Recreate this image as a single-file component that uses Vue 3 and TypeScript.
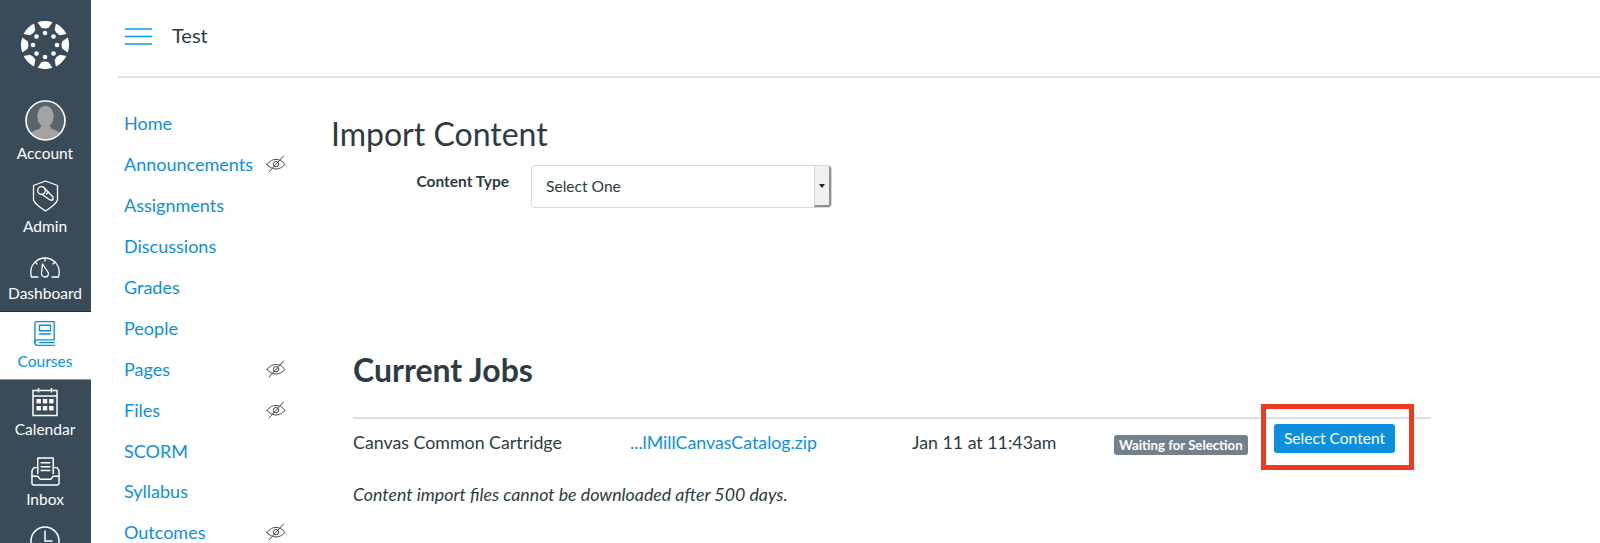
<script setup lang="ts">
const pt = (r: number, deg: number) => {
  const a = (deg * Math.PI) / 180
  return `${(50 + r * Math.cos(a)).toFixed(2)} ${(50 + r * Math.sin(a)).toFixed(2)}`
}
const wedges = Array.from({ length: 8 }, (_, i) => {
  const c = i * 45 - 90
  return `M${pt(50, c - 18)} A50 50 0 0 1 ${pt(50, c + 18)} L${pt(37, c + 12)} Q${pt(33, c)} ${pt(37, c - 12)}Z`
})
const dots = Array.from({ length: 8 }, (_, i) => {
  const a = ((i * 45 - 90) * Math.PI) / 180
  return { x: 50 + 25 * Math.cos(a), y: 50 + 25 * Math.sin(a) }
})
const navItems = [
  { label: 'Home', hidden: false },
  { label: 'Announcements', hidden: true },
  { label: 'Assignments', hidden: false },
  { label: 'Discussions', hidden: false },
  { label: 'Grades', hidden: false },
  { label: 'People', hidden: false },
  { label: 'Pages', hidden: true },
  { label: 'Files', hidden: true },
  { label: 'SCORM', hidden: false },
  { label: 'Syllabus', hidden: false },
  { label: 'Outcomes', hidden: true },
]
</script>

<template>
  <div class="app">
    <aside class="rail">
      <svg class="logo" viewBox="0 0 100 100" fill="#fff">
        <path v-for="(d, i) in wedges" :key="i" :d="d" />
        <circle v-for="(c, i) in dots" :key="'d' + i" :cx="c.x" :cy="c.y" r="4.800" />
      </svg>

      <div class="rail-item account">
        <svg class="avatar" viewBox="0 0 40 40">
          <defs><clipPath id="av"><circle cx="20" cy="20" r="18.500" /></clipPath></defs>
          <circle cx="20" cy="20" r="19" fill="#59636b" />
          <g clip-path="url(#av)" fill="#a3a3a3">
            <ellipse cx="20" cy="16" rx="8" ry="10.500" />
            <path d="M3 40c0-8 5-10 11-12l2-3h8l2 3c6 2 11 4 11 12z" />
          </g>
          <circle cx="20" cy="20" r="19" fill="none" stroke="#fff" stroke-width="1.600" />
        </svg>
        <span>Account</span>
      </div>

      <div class="rail-item admin">
        <svg class="ico" viewBox="0 0 27 32" fill="none" stroke="#fff" stroke-width="1.300" stroke-linejoin="round" stroke-linecap="round">
          <path d="M13.500 1 L25.500 5.500 V20 C24 24 19 27.500 13.500 31 C8 27.500 3 24 1.500 20 V5.500 Z" />
          <circle cx="9.500" cy="10.500" r="3.800" />
          <path d="M12 7.800 L21 17 V20 H18 L9.800 14.300" />
          <path d="M14.500 14 L16.500 12" />
        </svg>
        <span>Admin</span>
      </div>

      <div class="rail-item dash">
        <svg class="ico" viewBox="0 0 30 21" fill="none" stroke="#fff" stroke-width="1.300" stroke-linecap="round" stroke-linejoin="round">
          <path d="M8 20 H1.500 C1 18.500 .8 17 .8 15 A14.200 14 0 0 1 29.200 15 C29.200 17 29 18.500 28.500 20 H22" />
          <path d="M15 1 V4 M5 5 L7 7 M25 5 L23 7" />
          <path d="M12.500 7 L17.500 14.500 A3.200 3.200 0 0 1 15 20 A3.500 3.500 0 0 1 11.500 16 Z" />
        </svg>
        <span>Dashboard</span>
      </div>

      <div class="rail-item courses">
        <svg class="ico" viewBox="0 0 24 28" fill="none" stroke="#0d8fe0" stroke-width="1.500" stroke-linejoin="round" stroke-linecap="round">
          <path d="M3 1 H22 V21 H5 C2 21 1 22.500 1 24 C1 26 3 27 5 27 H22" />
          <path d="M1 24 V4 C1 2 2 1 3 1" />
          <path d="M6 24 H22" />
          <rect x="6" y="5" width="12" height="6" />
          <path d="M6 14.500 H18" />
        </svg>
        <span>Courses</span>
      </div>

      <div class="rail-item cal">
        <svg class="ico" viewBox="0 0 26 30" fill="none" stroke="#fff" stroke-width="1.500">
          <rect x="1" y="3.500" width="24" height="25" />
          <path d="M1 9 H25 M6.500 1 V5.500 M19.500 1 V5.500" />
          <g fill="#fff" stroke="none">
            <rect x="4.500" y="12" width="4.400" height="4.400" /><rect x="10.800" y="12" width="4.400" height="4.400" /><rect x="17.100" y="12" width="4.400" height="4.400" />
            <rect x="4.500" y="19" width="4.400" height="4.400" /><rect x="10.800" y="19" width="4.400" height="4.400" /><rect x="17.100" y="19" width="4.400" height="4.400" />
          </g>
        </svg>
        <span>Calendar</span>
      </div>

      <div class="rail-item inbox">
        <svg class="ico" viewBox="0 0 30 30" fill="none" stroke="#fff" stroke-width="1.500" stroke-linejoin="round" stroke-linecap="round">
          <path d="M7 17 V1 H23 V17" />
          <path d="M10.500 6 H19.500 M10.500 10 H19.500 M10.500 14 H19.500" />
          <path d="M7 11 H3 L1 14 V27 C1 28 2 29 3 29 H27 C28 29 29 28 29 27 V14 L27 11 H23" />
          <path d="M1 20 H7 C8 20 8 23 10 23 H20 C22 23 22 20 23 20 H29" />
        </svg>
        <span>Inbox</span>
      </div>

      <div class="rail-item history">
        <svg class="ico" viewBox="0 0 30 30" fill="none" stroke="#fff" stroke-width="1.500" stroke-linecap="round">
          <circle cx="15" cy="15" r="14" />
          <path d="M15 5 V15 H22" />
        </svg>
      </div>
    </aside>

    <div class="main">
      <header class="top">
        <svg class="burger" viewBox="0 0 27 17" stroke="#0d96ef" stroke-width="1.400">
          <path d="M0 1H27M0 8.500H27M0 16H27" />
        </svg>
        <span class="crumb">Test</span>
      </header>

      <div class="body">
        <nav class="course-nav">
          <div v-for="item in navItems" :key="item.label" class="nav-row">
            <a class="link">{{ item.label }}</a>
            <svg v-if="item.hidden" class="eye" viewBox="0 0 20 18" fill="none" stroke="#44494d" stroke-width="1" stroke-linecap="round">
              <path d="M1 9.500 C4 5.500 7 4.500 10 4.500 C13 4.500 16 5.500 19 9.500 C16 12.500 13 14 10 14 C7 14 4 12.500 1 9.500 Z" />
              <circle cx="10" cy="9.200" r="2.700" />
              <path d="M3 17 L17.500 1" />
            </svg>
          </div>
        </nav>

        <section class="content">
          <h1>Import Content</h1>
          <div class="field">
            <label>Content Type</label>
            <div class="select">
              <span class="value">Select One</span>
              <span class="arrow"><i></i></span>
            </div>
          </div>

          <div class="jobs">
            <h2>Current Jobs</h2>
            <div class="row">
              <span>Canvas Common Cartridge</span>
              <a class="link">...lMillCanvasCatalog.zip</a>
              <span>Jan 11 at 11:43am</span>
              <span class="badge-cell"><span class="badge">Waiting for Selection</span></span>
              <button class="btn" type="button">Select Content</button>
              <div class="callout"></div>
            </div>
            <p class="note">Content import files cannot be downloaded after 500 days.</p>
          </div>
        </section>
      </div>
    </div>
  </div>
</template>

<style>
html, body { margin: 0; background: #fff; overflow: hidden; }
</style>

<style scoped>
.app {
  display: flex;
  height: 543px;
  overflow: hidden;
  font-family: Lato, "Open Sans", sans-serif;
  color: #2d3b45;
  background: #fff;
}
.rail {
  width: 91px;
  flex: none;
  background: #394b58;
  display: flex;
  flex-direction: column;
  align-items: stretch;
  overflow: hidden;
}
.logo { width: 48px; height: 48px; margin: 21px 22px 0 21px; display: block; flex: none; }
.rail-item {
  display: flex;
  flex-direction: column;
  align-items: center;
  color: #fff;
  font-size: 15.500px;
  line-height: 18px;
  flex: none;
  padding-right: 1px;
}
.ico { display: block; flex: none; }
.account { margin-top: 31px; }
.avatar { width: 41px; height: 41px; display: block; margin-bottom: 3px; }
.admin { margin-top: 18px; }
.admin .ico { width: 27px; height: 32px; margin-bottom: 5px; }
.dash { margin-top: 22px; padding-bottom: 9px; }
.dash .ico { width: 30px; height: 21px; margin-bottom: 6px; }
.courses { background: #fff; color: #0d8fe0; padding: 8px 1px 9px 0; border-top: 1px solid #1f2d38; border-bottom: 1px solid #8796a0; }
.courses .ico { width: 22px; height: 27px; margin-bottom: 5px; }
.cal { margin-top: 7px; }
.cal .ico { width: 26px; height: 30px; margin-bottom: 3px; }
.inbox { margin-top: 19px; }
.inbox .ico { width: 29px; height: 29px; margin-bottom: 4px; }
.history { margin-top: 18px; }
.history .ico { width: 30px; height: 30px; }

.main { flex: 1; min-width: 0; padding-left: 27px; }
.top {
  border-bottom: 2px solid #dfe3e3;
  display: flex;
  align-items: center;
  gap: 20px;
  padding: 0 0 4px 7px;
  box-sizing: border-box;
  height: 78px;
}
.burger { width: 27px; height: 17px; display: block; }
.crumb { font-size: 20px; line-height: 24px; padding-bottom: 3px; }
.body { display: flex; }
.link { color: #0d8fe0; text-decoration: none; }
.course-nav { width: 213px; flex: none; padding: 25px 0 0 6px; box-sizing: border-box; }
.nav-row {
  height: 40.900px;
  display: flex;
  align-items: center;
  justify-content: space-between;
  font-size: 18px;
  width: 162px;
}
.eye { width: 20px; height: 18px; display: block; }
.content { flex: 1; min-width: 0; }
h1 { margin: 34px 0 0; font-size: 32px; line-height: 44px; font-weight: 400; }
.field { display: flex; align-items: flex-start; margin-top: 9px; }
.field label { width: 178px; margin-right: 22px; text-align: right; font-size: 15.500px; font-weight: 700; line-height: 18px; padding-top: 7px; }
.select {
  width: 301px;
  height: 43px;
  box-sizing: border-box;
  border: 1px solid #d5d9dc;
  border-radius: 4px;
  display: flex;
  align-items: center;
  justify-content: space-between;
  font-size: 15.600px;
  padding-left: 14px;
  overflow: hidden;
}
.value { padding-bottom: 2px; }
.arrow {
  width: 17px;
  height: 100%;
  background: #f0f0f0;
  border-left: 1px solid #d5d9dc;
  border-right: 2px solid #8f8f8f;
  border-bottom: 2px solid #8f8f8f;
  box-sizing: border-box;
  display: flex;
  align-items: center;
  justify-content: center;
}
.arrow i { border: 3.500px solid transparent; border-top: 4px solid #222; border-bottom: 0; }
.jobs { margin: 142px 0 0 22px; width: 1078px; }
h2 { margin: 0; font-size: 32px; line-height: 40px; font-weight: 700; }
.row {
  position: relative;
  margin-top: 27px;
  padding-top: 1px;
  border-top: 2px solid #d9dee2;
  display: grid;
  grid-template-columns: 277px 282px 202px 160px auto;
  justify-content: start;
  align-items: center;
  font-size: 17.800px;
  height: 44px;
}
.badge-cell { display: flex; padding-top: 5px; }
.badge { background: #73818c; color: #fff; font-size: 13.200px; font-weight: 700; line-height: 20px; padding: 0 5px; border-radius: 3px; white-space: nowrap; }
.btn {
  width: 121px;
  height: 29px;
  margin: 0;
  border: 0;
  border-radius: 3px;
  background: #0d8fe0;
  color: #fff;
  font: 15.600px Lato, sans-serif;
  padding: 0;
  margin-top: -8px;
}
.callout {
  position: absolute;
  left: 908px;
  top: -15px;
  width: 153px;
  height: 66px;
  border: 5px solid #ee3a1f;
  box-sizing: border-box;
}
.note { margin: 20px 0 0; font-size: 17.800px; font-style: italic; line-height: 20px; }
</style>
